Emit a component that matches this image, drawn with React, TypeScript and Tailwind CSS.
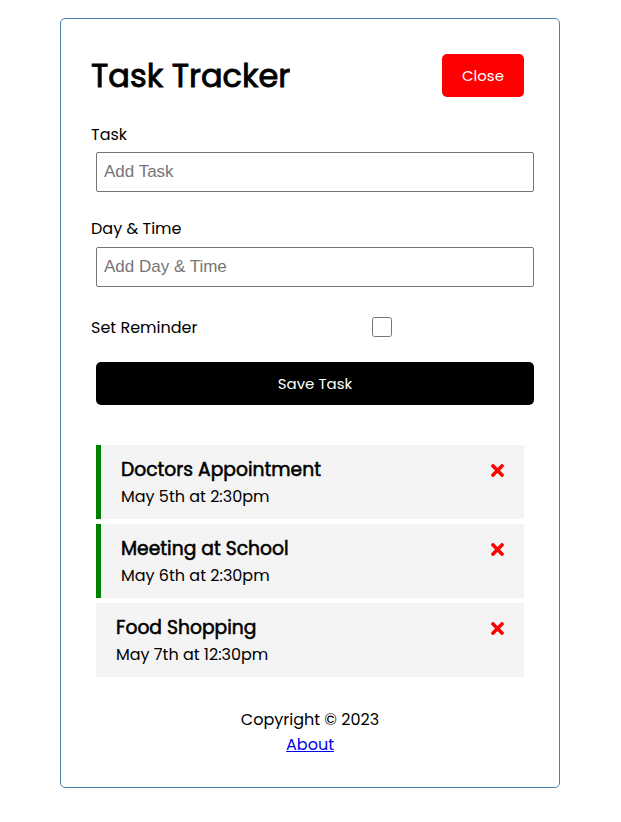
import { FaTimes } from "react-icons/fa";

interface Task {
  id: number;
  text: string;
  day: string;
  reminder: boolean;
}

const tasks: Task[] = [
  { id: 1, text: "Doctors Appointment", day: "May 5th at 2:30pm", reminder: true },
  { id: 2, text: "Meeting at School", day: "May 6th at 2:30pm", reminder: true },
  { id: 3, text: "Food Shopping", day: "May 7th at 12:30pm", reminder: false },
];

const inputCls =
  "mx-[5px] mt-[5px] h-10 w-full shrink-0 border border-[#767676] rounded-[2px] px-[7px] py-[3px] font-['Liberation_Sans',Arial,sans-serif] text-[17px] placeholder:text-[#757575] outline-none";

export default function App() {
  return (
    <div className="font-['Poppins','Open_Sans',sans-serif] text-black bg-white min-h-[822px] pt-[18px]">
      <div className="ml-[60px] w-[500px] rounded-[5px] border border-[#4682b4] p-[30px]">
        <header className="flex items-center justify-between">
          <h1 className="text-[32px] font-normal leading-[48px] [-webkit-text-stroke:0.9px_black]">Task Tracker</h1>
          <button className="m-[5px] rounded-[5px] bg-[#ff0000] px-5 py-[10px] text-[15px] leading-[23px] text-white">
            Close
          </button>
        </header>

        <form className="flex flex-col">
          <div className="mt-[21px] flex flex-col">
            <label className="text-base leading-6">Task</label>
            <input type="text" placeholder="Add Task" className={inputCls} />
          </div>
          <div className="mt-[25px] flex flex-col">
            <label className="text-base leading-6">Day &amp; Time</label>
            <input type="text" placeholder="Add Day & Time" className={`${inputCls} mt-[6px]`} />
          </div>
          <div className="mt-6 flex h-[26px] items-start">
            <label className="flex-1 pt-[5px] text-base leading-6">Set Reminder</label>
            <div className="flex flex-[2] justify-center pr-[2px] pt-[6px]">
              <input type="checkbox" className="m-0 h-5 w-5" />
            </div>
          </div>
          <button
            type="button"
            className="mx-[5px] mt-[25px] w-full rounded-[5px] bg-black px-5 py-[10px] text-[15px] leading-[23px] text-white"
          >
            Save Task
          </button>
        </form>

        <div className="mx-[5px] mt-10 flex flex-col gap-[5px]">
          {tasks.map((task) => (
            <div
              key={task.id}
              className={`bg-[#f4f4f4] px-5 py-[10px] ${task.reminder ? "border-l-[5px] border-[#008000]" : ""}`}
            >
              <h3 className="flex items-center justify-between text-[18.72px] font-normal leading-[30px] [-webkit-text-stroke:0.55px_black]">
                {task.text}
                <FaTimes className="h-[19px] w-[13px] text-[#ff0000]" />
              </h3>
              <p className="text-base leading-6">{task.day}</p>
            </div>
          ))}
        </div>

        <footer className="mt-[30px] text-center text-base leading-[25px]">
          <p>Copyright &copy; 2023</p>
          <a href="#" className="text-[#0000ee] underline">
            About
          </a>
        </footer>
      </div>
    </div>
  );
}
